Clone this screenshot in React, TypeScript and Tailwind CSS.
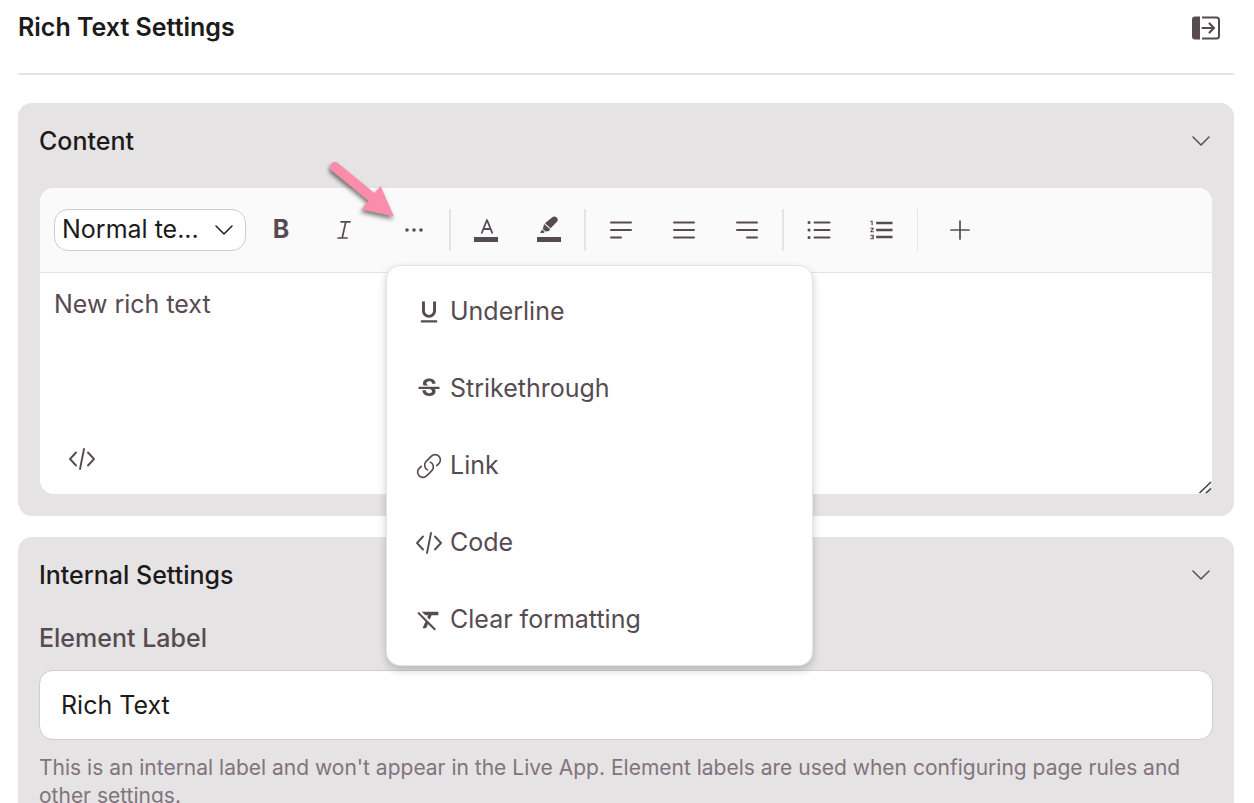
import { useState } from 'react';
import type { ReactNode } from 'react';
import { MdFormatClear, MdFormatListNumbered, MdFormatUnderlined, MdStrikethroughS } from 'react-icons/md';

const CollapseIcon = () => (
  <svg width="30" height="24" viewBox="0 0 30 24" fill="none">
    <path d="M4 .5h5v23H4a3 3 0 0 1-3-3v-17a3 3 0 0 1 3-3z" fill="currentColor" />
    <path d="M11 1.500h14.500a2.500 2.500 0 0 1 2.500 2.500v16a2.500 2.500 0 0 1-2.500 2.500H11" stroke="currentColor" strokeWidth="2" />
    <path d="M11.500 12h11M18.500 7.500l4.500 4.500-4.500 4.500" stroke="currentColor" strokeWidth="2.200" strokeLinecap="round" strokeLinejoin="round" />
  </svg>
);

const ChevronIcon = ({ className }: { className?: string }) => (
  <svg className={className} width="20" height="12" viewBox="0 0 20 12" fill="none">
    <path d="M2 2l8 8 8-8" stroke="currentColor" strokeWidth="1.500" strokeLinecap="round" strokeLinejoin="round" />
  </svg>
);

const ItalicIcon = () => (
  <svg width="16" height="20" viewBox="0 0 16 20" fill="none">
    <path d="M5 1.800h9M2 18h9M9.800 1.800L6.200 18" stroke="currentColor" strokeWidth="1.700" strokeLinecap="round" />
  </svg>
);

const DotsIcon = () => (
  <svg width="20" height="6" viewBox="0 0 20 6" fill="currentColor">
    <circle cx="3" cy="3" r="1.800" />
    <circle cx="10" cy="3" r="1.800" />
    <circle cx="17" cy="3" r="1.800" />
  </svg>
);

const TextColorIcon = () => (
  <svg width="24" height="28" viewBox="0 0 24 28" fill="none">
    <path d="M7.500 17.500L13 4l5.500 13.500M9.300 13h7.400" stroke="currentColor" strokeWidth="1.800" strokeLinejoin="round" />
    <rect y="21" width="24" height="5" fill="currentColor" />
  </svg>
);

const HighlightIcon = () => (
  <svg width="24" height="28" viewBox="0 0 24 28" fill="currentColor">
    <path d="M15 1.500c1.200-1.300 3.200-1.300 4.500-.2s1.700 2.900.7 4.300l-6.500 6.700-5.800-5z" />
    <path d="M7.100 7.900l5.900 5.200-.9 1.800-3.500.6-2.800-2.500z" />
    <path d="M5 13.600l2.800 2.400-1.300 1H3.200z" />
    <rect y="21" width="24" height="5" />
  </svg>
);

const LinesIcon = ({ last }: { last: 'left' | 'full' | 'right' }) => (
  <svg width="24" height="20" viewBox="0 0 24 20" fill="none">
    <path
      d={`M2 2.500h20M2 10h20${last === 'left' ? 'M2 17.500h10' : last === 'right' ? 'M12 17.500h10' : 'M2 17.500h20'}`}
      stroke="currentColor"
      strokeWidth="2"
      strokeLinecap="round"
    />
  </svg>
);

const BulletsIcon = () => (
  <svg width="24" height="20" viewBox="0 0 24 20" fill="none">
    <path d="M7.500 2.500h15M7.500 10h15M7.500 17.500h15" stroke="currentColor" strokeWidth="2" strokeLinecap="round" />
    <path d="M2 2.500h.1M2 10h.1M2 17.500h.1" stroke="currentColor" strokeWidth="3" strokeLinecap="round" />
  </svg>
);

const PlusIcon = () => (
  <svg width="20" height="20" viewBox="0 0 20 20" fill="none">
    <path d="M10 1v18M1 10h18" stroke="currentColor" strokeWidth="1.700" strokeLinecap="round" />
  </svg>
);

const CodeIcon = () => (
  <svg width="28" height="24" viewBox="0 0 28 24" fill="none">
    <path d="M8 5.500L2 12l6 6.500M20 5.500l6 6.500-6 6.500M16 2l-4 20" stroke="currentColor" strokeWidth="1.900" strokeLinecap="round" strokeLinejoin="round" />
  </svg>
);

const LinkIcon = () => (
  <svg width="28" height="28" viewBox="0 0 24 24" fill="none">
    <path
      d="M13.190 8.688a4.500 4.500 0 0 1 1.242 7.244l-4.500 4.500a4.500 4.500 0 0 1-6.364-6.364l1.757-1.757m13.350-.622l1.757-1.757a4.500 4.500 0 0 0-6.364-6.364l-4.500 4.500a4.500 4.500 0 0 0 1.242 7.244"
      stroke="currentColor"
      strokeWidth="1.400"
      strokeLinecap="round"
      strokeLinejoin="round"
    />
  </svg>
);

const PointerArrow = () => (
  <svg className="pointer-events-none absolute -right-5 -bottom-5 z-20" width="80" height="72" viewBox="0 0 80 72" fill="none">
    <g style={{ filter: 'drop-shadow(-1px 3px 2px rgb(0 0 0 / 0.5))' }}>
      <path d="M16 10L55 42" stroke="#fb8dab" strokeWidth="10" strokeLinecap="round" />
      <path d="M61.500 29L75 59.500 42.500 52.500z" fill="#fb8dab" />
    </g>
  </svg>
);

const menuItems = [
  { label: 'Underline', icon: <MdFormatUnderlined size={28} /> },
  { label: 'Strikethrough', icon: <MdStrikethroughS size={28} /> },
  { label: 'Link', icon: <LinkIcon /> },
  { label: 'Code', icon: <CodeIcon /> },
  { label: 'Clear formatting', icon: <MdFormatClear size={28} /> },
];

function ToolButton({ label, onClick, children }: { label: string; onClick?: () => void; children: ReactNode }) {
  return (
    <button
      type="button"
      aria-label={label}
      onClick={onClick}
      className="flex h-[42px] w-[42px] shrink-0 items-center justify-center rounded-lg hover:bg-gray-200"
    >
      {children}
    </button>
  );
}

function ToolGroup({ children }: { children: ReactNode }) {
  return <div className="flex items-center gap-[21px] px-[14px]">{children}</div>;
}

const Separator = () => <div className="h-[42px] w-[2px] shrink-0 bg-[#e5e3e4]" />;

function Panel({ title, children }: { title: string; children: ReactNode }) {
  const [open, setOpen] = useState(true);

  return (
    <section className="rounded-[14px] bg-[#e5e3e4] px-[21px] pt-[18px] pb-[22px]">
      <button
        type="button"
        aria-expanded={open}
        onClick={() => setOpen(!open)}
        className="flex h-[41px] w-full items-center justify-between pr-[2px] text-[25px] font-medium text-[#1c1a1b]"
      >
        {title}
        <ChevronIcon className="mb-[2px] text-[#574b52]" />
      </button>
      {open && children}
    </section>
  );
}

export default function App() {
  const [menuOpen, setMenuOpen] = useState(true);
  const [label, setLabel] = useState('Rich Text');

  return (
    <main className="h-screen overflow-hidden bg-white pr-5 pl-[18px] font-['Inter',sans-serif] text-[#574b52]">
      {/* Header */}
      <header className="flex h-[75px] items-start justify-between border-b-2 border-[#e5e3e4] pt-2 pr-[13px]">
        <h1 className="text-[25px] leading-[38px] font-semibold text-[#1c1a1b]">Rich Text Settings</h1>
        <button type="button" aria-label="Collapse panel" className="flex h-10 items-center">
          <CollapseIcon />
        </button>
      </header>

      <div className="flex flex-col gap-[21px] pt-7">
        <Panel title="Content">
          <div className="relative mx-px mt-[26px] rounded-[14px] bg-white">
            {/* Toolbar */}
            <div className="flex h-[85px] items-center rounded-t-[14px] border-b border-[#e5e3e4] bg-[#fafafa] pl-[14px]">
              <div className="relative">
                <select
                  aria-label="Text style"
                  className="h-[42px] w-[192px] appearance-none truncate rounded-[14px] border border-[#d1cdcf] bg-white pr-10 pl-[7px] text-[25px] text-[#1c1a1b]"
                >
                  <option value="normal">Normal te...</option>
                  <option value="h1">Heading 1</option>
                  <option value="h2">Heading 2</option>
                </select>
                <ChevronIcon className="pointer-events-none absolute top-[15px] right-3 text-[#1c1a1b]" />
              </div>
              <ToolGroup>
                <ToolButton label="Bold"><span className="text-[25px] font-bold">B</span></ToolButton>
                <ToolButton label="Italic"><ItalicIcon /></ToolButton>
              </ToolGroup>
              <div className="relative px-[14px]">
                <ToolButton label="More formatting" onClick={() => setMenuOpen(!menuOpen)}><DotsIcon /></ToolButton>
                <div className="absolute right-full bottom-full">
                  <div className="relative">
                    <PointerArrow />
                  </div>
                </div>
                {menuOpen && (
                  <div role="menu" className="absolute top-[56px] left-[7px] z-10 w-[427px] rounded-[14px] border border-[#e5e3e4] bg-white py-[7px] shadow-[0_4px_8px_rgb(0_0_0/0.2)]">
                    {menuItems.map((item) => (
                      <button
                        key={item.label}
                        type="button"
                        role="menuitem"
                        className="flex h-[77px] w-full items-center gap-[7px] px-7 text-[25px] hover:bg-gray-50"
                      >
                        <span className="flex w-7 shrink-0 justify-center">{item.icon}</span>
                        {item.label}
                      </button>
                    ))}
                  </div>
                )}
              </div>
              <Separator />
              <ToolGroup>
                <ToolButton label="Text color"><TextColorIcon /></ToolButton>
                <ToolButton label="Highlight color"><HighlightIcon /></ToolButton>
              </ToolGroup>
              <Separator />
              <ToolGroup>
                <ToolButton label="Align left"><LinesIcon last="left" /></ToolButton>
                <ToolButton label="Justify"><LinesIcon last="full" /></ToolButton>
                <ToolButton label="Align right"><LinesIcon last="right" /></ToolButton>
              </ToolGroup>
              <Separator />
              <ToolGroup>
                <ToolButton label="Bulleted list"><BulletsIcon /></ToolButton>
                <ToolButton label="Numbered list"><MdFormatListNumbered size={28} /></ToolButton>
              </ToolGroup>
              <div className="mr-[21px] h-[42px] w-px bg-[#e5e3e4]" />
              <ToolButton label="Insert"><PlusIcon /></ToolButton>
            </div>

            {/* Editor body */}
            <textarea
              aria-label="Content"
              defaultValue="New rich text"
              className="block h-[165px] w-full resize-none px-[14px] pt-3 text-[25px] leading-[38px] outline-none"
            />
            <div className="flex h-14 items-start pl-[21px]">
              <ToolButton label="Source code"><CodeIcon /></ToolButton>
            </div>
            <svg className="absolute right-0 bottom-0" width="14" height="14" viewBox="0 0 14 14" fill="none">
              <path d="M1.500 13L13 2M8 13l5-4.500" stroke="#3d3a3c" strokeWidth="1.500" />
            </svg>
          </div>
        </Panel>

        <Panel title="Internal Settings">
          <label htmlFor="element-label" className="mt-[22px] block text-[25px] leading-10 font-medium">
            Element Label
          </label>
          <input
            id="element-label"
            type="text"
            value={label}
            onChange={(e) => setLabel(e.target.value)}
            className="mt-3 h-[70px] w-full rounded-[14px] border border-[#d1cdcf] bg-white px-[21px] text-[25px] text-[#1c1a1b] outline-none"
          />
          <p className="mt-[14px] text-[21px] leading-7 text-[#81747c]">
            This is an internal label and won't appear in the Live App. Element labels are used when configuring page rules and other settings.
          </p>
        </Panel>
      </div>
    </main>
  );
}
